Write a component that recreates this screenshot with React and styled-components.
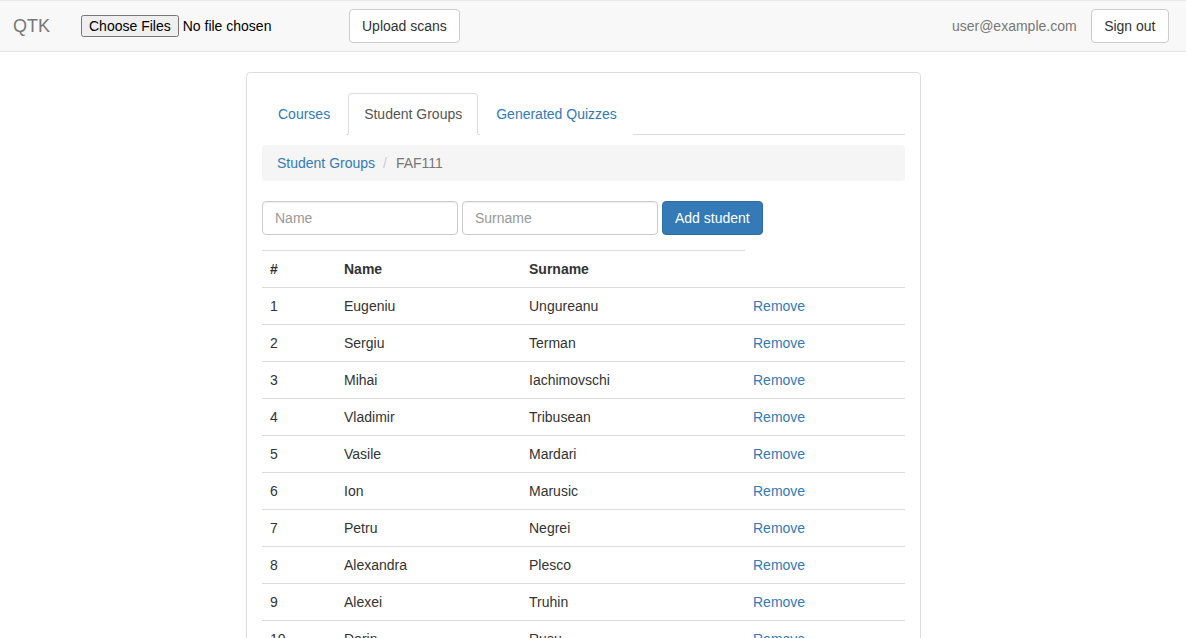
import React from 'react'
import styled, { createGlobalStyle } from 'styled-components'

const students = [
  ['Eugeniu', 'Ungureanu'],
  ['Sergiu', 'Terman'],
  ['Mihai', 'Iachimovschi'],
  ['Vladimir', 'Tribusean'],
  ['Vasile', 'Mardari'],
  ['Ion', 'Marusic'],
  ['Petru', 'Negrei'],
  ['Alexandra', 'Plesco'],
  ['Alexei', 'Truhin'],
  ['Dorin', 'Rusu'],
  ['Andrei', 'Cojocaru'],
]

function App() {
  return (
    <>
      <Global />
      <Navbar>
        <NavLeft>
          <Brand>QTK</Brand>
          <FileInput type="file" multiple />
          <Button>Upload scans</Button>
        </NavLeft>
        <NavRight>
          <NavText>user@example.com</NavText>
          <Button wide>Sign out</Button>
        </NavRight>
      </Navbar>

      <Main>
        <Panel>
          <Tabs>
            <Tab>Courses</Tab>
            <Tab active>Student Groups</Tab>
            <Tab>Generated Quizzes</Tab>
          </Tabs>

          <Breadcrumb>
            <Crumb as="a">Student Groups</Crumb>
            <Sep>/</Sep>
            <Crumb current>FAF111</Crumb>
          </Breadcrumb>

          <AddForm>
            <Input placeholder="Name" />
            <Input placeholder="Surname" />
            <Button primary>Add student</Button>
          </AddForm>
          <Rule />

          <Table>
            <colgroup>
              <col style={{ width: 74 }} />
              <col style={{ width: 185 }} />
              <col style={{ width: 224 }} />
              <col style={{ width: 160 }} />
            </colgroup>
            <thead>
              <tr>
                <Th>#</Th>
                <Th>Name</Th>
                <Th>Surname</Th>
                <Th />
              </tr>
            </thead>
            <tbody>
              {students.map(([name, surname], i) => (
                <tr key={i}>
                  <Td>{i + 1}</Td>
                  <Td>{name}</Td>
                  <Td>{surname}</Td>
                  <Td><Link>Remove</Link></Td>
                </tr>
              ))}
            </tbody>
          </Table>
        </Panel>
      </Main>
    </>
  )
}

export default App

const Global = createGlobalStyle`
html { overflow: hidden; }
body {
  margin: 0;
  font-family: "Liberation Sans", Arial, sans-serif;
  font-size: 14px;
  line-height: 20px;
  color: #333;
  background: #fff;
}
`

const Navbar = styled.div`
display: flex;
justify-content: space-between;
align-items: center;
height: 50px;
background: #f8f8f8;
border-top: 1px solid #e7e7e7;
border-bottom: 1px solid #e7e7e7;
padding: 0 17px 0 13px;
`

const NavLeft = styled.div`
display: flex;
align-items: center;
`

const NavRight = styled.div`
display: flex;
align-items: center;
gap: 14px;
`

const Brand = styled.span`
font-size: 18px;
line-height: 20px;
color: #777;
width: 68px;
`

const FileInput = styled.input`
font-family: inherit;
font-size: 14px;
width: 253px;
margin-right: 15px;
color: #000;
`

const NavText = styled.span`
color: #777;
`

const Button = styled.button`
height: 34px;
padding: 6px ${p => (p.wide ? '12.5px' : '12px')};
font-family: inherit;
font-size: 14px;
line-height: 20px;
border-radius: 4px;
cursor: pointer;
border: 1px solid ${p => (p.primary ? '#2e6da4' : '#ccc')};
background: ${p => (p.primary ? '#337ab7' : '#fff')};
color: ${p => (p.primary ? '#fff' : '#333')};
`

const Main = styled.div`
display: flex;
justify-content: center;
padding: 20px 19px 0 0;
`

const Panel = styled.div`
width: 643px;
border: 1px solid #ddd;
border-radius: 4px;
padding: 20px 15px 15px;
`

const Tabs = styled.div`
display: flex;
border-bottom: 1px solid #ddd;
`

const Tab = styled.a`
padding: 10px 15px;
margin-right: 2px;
margin-bottom: -1px;
line-height: 20px;
border: 1px solid ${p => (p.active ? '#ddd' : 'transparent')};
border-bottom-color: ${p => (p.active ? '#fff' : 'transparent')};
border-radius: 4px 4px 0 0;
background: #fff;
color: ${p => (p.active ? '#555' : '#337ab7')};
cursor: pointer;
`

const Breadcrumb = styled.div`
margin: 10px 0 20px;
padding: 8px 15px;
background: #f5f5f5;
border-radius: 4px;
display: flex;
`

const Crumb = styled.span`
color: ${p => (p.current ? '#777' : '#337ab7')};
`

const Sep = styled.span`
color: #ccc;
padding: 0 5px 0 8px;
margin-right: 4px;
`

const AddForm = styled.div`
display: flex;
gap: 4px;
`

const Input = styled.input`
box-sizing: border-box;
width: 196px;
height: 34px;
padding: 6px 12px;
font-family: inherit;
font-size: 14px;
color: #555;
border: 1px solid #ccc;
border-radius: 4px;
box-shadow: inset 0 1px 1px rgba(0,0,0,.075);
outline: none;
&::placeholder { color: #999; }
`

const Rule = styled.div`
width: 483px;
margin-top: 15px;
border-top: 1px solid #ddd;
`

const Table = styled.table`
width: 643px;
border-collapse: collapse;
table-layout: fixed;
`

const Th = styled.th`
text-align: left;
padding: 8px;
line-height: 20px;
font-weight: bold;
border-bottom: 1px solid #ddd;
`

const Td = styled.td`
padding: 8px;
line-height: 20px;
border-top: 1px solid #ddd;
`

const Link = styled.a`
color: #337ab7;
cursor: pointer;
`
